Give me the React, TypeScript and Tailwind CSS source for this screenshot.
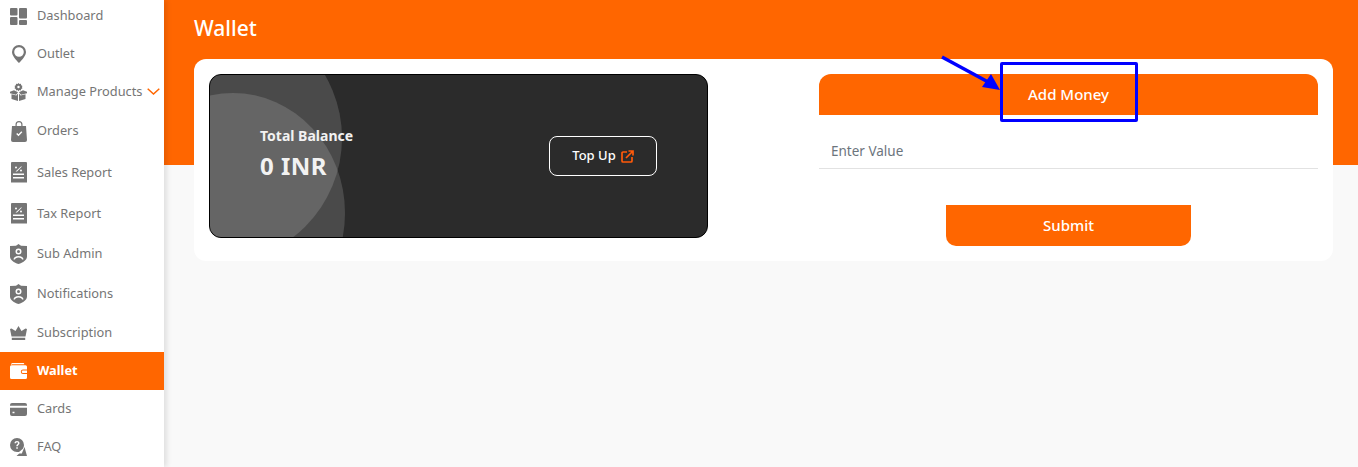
import type { ReactNode } from "react";

const receipt = (
  <svg viewBox="0 0 17 22" className="h-[22px] w-[17px]" fill="currentColor">
    <path fillRule="evenodd" d="M1 0h15a1 1 0 0 1 1 1v19l-1 1-1-1-1 1-1-1-1 1-1-1-1 1-1-1-1 1-1-1-1 1-1-1-1 1-1-1-1 1-1-1V1a1 1 0 0 1 1-1Zm2 11.500V13h11v-1.500H3ZM3 15v1.500h11V15H3ZM6 4.500a1 1 0 1 0 0 2 1 1 0 0 0 0-2Zm5 .000L5.500 9.500H7L12 4.500h-1ZM11 7.500a1 1 0 1 0 0 2 1 1 0 0 0 0-2Z" />
  </svg>
);

const shield = (
  <svg viewBox="0 0 17 20" className="h-[20px] w-[17px]" fill="currentColor">
    <path fillRule="evenodd" d="M8.500 0l2.500 1.700L17 2v10.500c0 3.500-4 6-8.500 7.500C4 18.500 0 16 0 12.500V2l6-.3L8.500 0Zm0 4.500a3 3 0 1 0 0 6 3 3 0 0 0 0-6Zm0 1.500a1.500 1.500 0 1 1 0 3 1.500 1.500 0 0 1 0-3ZM3.500 15.500H5c0-1 1.500-2 3.500-2s3.500 1 3.500 2h1.500c0-2-2.200-3.500-5-3.500s-5 1.500-5 3.500Z" />
  </svg>
);

const navItems: { label: string; rowClass: string; icon: ReactNode; active?: boolean; chevron?: boolean }[] = [
  {
    label: "Dashboard",
    rowClass: "h-[38px]",
    icon: (
      <svg viewBox="0 0 17 17" className="h-[17px] w-[17px]" fill="currentColor">
        <rect width="7.500" height="7.500" rx="1" />
        <rect y="9" width="7.500" height="8" rx="1" />
        <rect x="9" width="8" height="10.500" rx="1" />
        <rect x="9" y="12" width="8" height="5" rx="1" />
      </svg>
    ),
  },
  {
    label: "Outlet",
    rowClass: "h-[38px]",
    icon: (
      <svg viewBox="0 0 14 18" className="h-[18px] w-[14px]" fill="currentColor">
        <path fillRule="evenodd" d="M7 0a7 7 0 0 1 7 7c0 3.500-3.500 7.500-7 11C3.500 14.500 0 10.500 0 7a7 7 0 0 1 7-7Zm0 2.200a4.800 4.800 0 1 0 0 9.600 4.800 4.800 0 0 0 0-9.600Z" />
      </svg>
    ),
  },
  {
    label: "Manage Products",
    rowClass: "h-[38px]",
    chevron: true,
    icon: (
      <svg viewBox="0 0 17 18" className="h-[18px] w-[17px]" fill="currentColor">
        <path fillRule="evenodd" d="M8.500 0l1 1.100 1.400-.3.300 1.400 1.300.7-.6 1.200.6 1.200-1.300.7-.3 1.400-1.400-.3-1 1.100-1-1.100-1.400.3-.3-1.400-1.300-.7.600-1.200-.6-1.200 1.300-.7.300-1.400 1.400.3 1-1.100Zm0 2.800a1.200 1.200 0 1 0 0 2.400 1.200 1.200 0 0 0 0-2.400Z" />
        <path d="M0 8.800 4 7.200 8 9.300 6 11.800 0 10.300ZM17 8.800l-4-1.600-4 2.100 2 2.500 6-1.500ZM1.500 11.300l4.900 1.300L8 10.600V18l-6.500-2ZM15.500 11.300l-4.900 1.300L9 10.600V18l6.500-2Z" />
      </svg>
    ),
  },
  {
    label: "Orders",
    rowClass: "h-[40px]",
    icon: (
      <svg viewBox="0 0 16 21" className="h-[21px] w-[16px]" fill="currentColor">
        <path fillRule="evenodd" d="M4.500 5V3.500a3.500 3.500 0 0 1 7 0V5H15l1 14a2 2 0 0 1-2 2H2a2 2 0 0 1-2-2L1 5h3.500Zm1.200 0h4.600V3.500a2.300 2.300 0 0 0-4.600 0V5Zm5.600 6.300-1-1-2.800 2.900-1.300-1.300-1 1 2.300 2.300 3.800-3.900Z" />
      </svg>
    ),
  },
  { label: "Sales Report", rowClass: "h-[43px]", icon: receipt },
  { label: "Tax Report", rowClass: "h-[40px]", icon: receipt },
  { label: "Sub Admin", rowClass: "h-[40px]", icon: shield },
  { label: "Notifications", rowClass: "h-[39px]", icon: shield },
  {
    label: "Subscription",
    rowClass: "h-[39px]",
    icon: (
      <svg viewBox="0 0 17 14" className="h-[14px] w-[17px]" fill="currentColor">
        <path d="M8.500 0l3 5L15.500 2.500 17 3l-1.500 7.500h-14L0 3l1.500-.5L5.500 5l3-5ZM1.800 11.800h13.400V14H1.800z" />
      </svg>
    ),
  },
  {
    label: "Wallet",
    rowClass: "h-[38px]",
    active: true,
    icon: (
      <svg viewBox="0 0 17 16" className="h-[16px] w-[17px]" fill="currentColor">
        <path fillRule="evenodd" d="M2.500 0H13c.8 0 1.300.5 1.300 1.300H2.500C1.800 1.300 1.300 1.600 1 2 1 .8 1.500 0 2.500 0ZM1.500 2.300h14A1.500 1.500 0 0 1 17 3.800V6.500h-4a2.200 2.200 0 0 0 0 4.400h4v3.600a1.500 1.500 0 0 1-1.500 1.500h-14A1.500 1.500 0 0 1 0 14.500V3.800a1.500 1.500 0 0 1 1.500-1.500ZM13 7.500h4V10h-4a1.250 1.250 0 0 1 0-2.500Z" />
      </svg>
    ),
  },
  {
    label: "Cards",
    rowClass: "h-[38px]",
    icon: (
      <svg viewBox="0 0 17 13" className="h-[13px] w-[17px]" fill="currentColor">
        <path fillRule="evenodd" d="M2 0h13a2 2 0 0 1 2 2v.800H0V2a2 2 0 0 1 2-2ZM0 4.800h17V11a2 2 0 0 1-2 2H2a2 2 0 0 1-2-2V4.800ZM2.500 8.800v1.500h2V8.800h-2Z" />
      </svg>
    ),
  },
  {
    label: "FAQ",
    rowClass: "h-[38px]",
    icon: (
      <svg viewBox="0 0 17 18" className="h-[18px] w-[17px]" fill="currentColor">
        <path fillRule="evenodd" d="M7 0a7 7 0 0 1 7 7c0 1.400-.4 2.700-1.100 3.800L9 14H7a7 7 0 0 1 0-14Zm-.700 9.200v1.600h1.500V9.200H6.300ZM7 3C5.600 3 4.500 3.900 4.500 5.200H6c0-.5.400-.9 1-.9s1 .4 1 .9c0 1-1.700 1.100-1.700 3h1.500c0-1.200 1.700-1.500 1.700-3C9.500 3.900 8.400 3 7 3Z" />
        <path d="M14.500 9 17 18H6.500l2.800-2.500h2.500L14.500 9Z" />
      </svg>
    ),
  },
];

function Sidebar() {
  return (
    <aside className="relative z-10 h-full w-[164px] shrink-0 overflow-hidden bg-white text-[12.8px] text-[#757575] shadow-[3px_0_5px_rgba(0,0,0,0.1)]">
      <nav className="-mt-[3px] flex flex-col">
        {navItems.map((item) => (
          <div
            key={item.label}
            className={`flex shrink-0 items-center ${item.rowClass} ${
              item.active ? "bg-[#ff6600] font-bold text-white" : ""
            }`}
          >
            <span className="flex w-[37px] shrink-0 justify-center">{item.icon}</span>
            <span className="whitespace-nowrap">{item.label}</span>
            {item.chevron && (
              <svg viewBox="0 0 13 7" className="ml-[5px] h-[7px] w-[13px] -translate-y-[1px] text-[#ff6600]" fill="none" stroke="currentColor" strokeWidth="1.500">
                <path d="M.7.7 6.500 6 12.300.7" />
              </svg>
            )}
          </div>
        ))}
      </nav>
    </aside>
  );
}

function BalanceCard() {
  return (
    <div className="relative flex h-[164px] w-[499px] items-center overflow-hidden rounded-[12px] border border-black bg-[#2b2b2b] px-[50px]">
      <div className="absolute -left-[118px] -top-[62px] h-[250px] w-[250px] rounded-full bg-white/15" />
      <div className="absolute -left-[89px] top-[18px] h-[240px] w-[224px] rounded-[50%] bg-white/15" />
      <div className="relative flex flex-1 items-center justify-between">
        <div className="-mt-[6px] text-[#f2f2f2]">
          <p className="text-[14px] font-bold leading-[20px]">Total Balance</p>
          <p className="mt-[5px] text-[24px] font-bold leading-[30px] tracking-[0.5px]">0 INR</p>
        </div>
        <button className="flex h-[40px] w-[108px] items-center justify-center gap-[5px] rounded-[8px] border border-white text-[13px] font-medium text-white">
          Top Up
          <svg viewBox="0 0 13 13" className="h-[13px] w-[13px] text-[#ff5a0a]" fill="none" stroke="currentColor" strokeWidth="1.700">
            <path d="M6 2H2a1 1 0 0 0-1 1v8a1 1 0 0 0 1 1h8a1 1 0 0 0 1-1V7" />
            <path d="M5 8 11.500 1.500M7.500 1h4.500v4.500" />
          </svg>
        </button>
      </div>
    </div>
  );
}

function AddMoneyForm() {
  return (
    <div className="w-[499px]">
      <div className="flex h-[41px] items-center justify-center rounded-t-[12px] bg-[#ff6600] text-[15px] font-medium text-white">
        Add Money
      </div>
      <div className="mt-[17px] flex h-[37px] items-center border-b border-[#e2e2e2] pl-[12px] pt-[3px] text-[13.5px] text-[#6c757d]">
        Enter Value
      </div>
      <div className="mt-[36px] flex justify-center">
        <button className="flex h-[41px] w-[245px] items-center justify-center rounded-b-[10px] bg-[#ff6600] text-[15px] font-medium text-white">
          Submit
        </button>
      </div>
    </div>
  );
}

export default function App() {
  return (
    <div className="relative flex h-[467px] w-[1358px] overflow-hidden bg-[#f9f9f9] font-['Noto_Sans',sans-serif]">
      <Sidebar />
      <main className="min-w-0 flex-1">
        <div className="h-[165px] bg-[#ff6600] px-[30px] pt-[14px]">
          <h1 className="text-[21px] font-medium leading-[28px] text-white">Wallet</h1>
          <div className="mt-[17px] flex h-[202px] w-[1139px] justify-between rounded-[12px] bg-white p-[15px]">
            <BalanceCard />
            <AddMoneyForm />
          </div>
        </div>
      </main>
      {/* annotation drawn on top of the screenshot */}
      <div className="absolute left-[1000px] top-[62px] h-[60px] w-[138px] rounded-[2px] border-[3px] border-[#0000ff]" />
      <svg className="absolute left-[938px] top-[54px]" width="66" height="40" viewBox="0 0 66 40">
        <path d="M4 3 L52 29" stroke="#0000ff" strokeWidth="3.500" fill="none" />
        <path d="M62 36 L44 33 L53 20 Z" fill="#0000ff" />
      </svg>
    </div>
  );
}
